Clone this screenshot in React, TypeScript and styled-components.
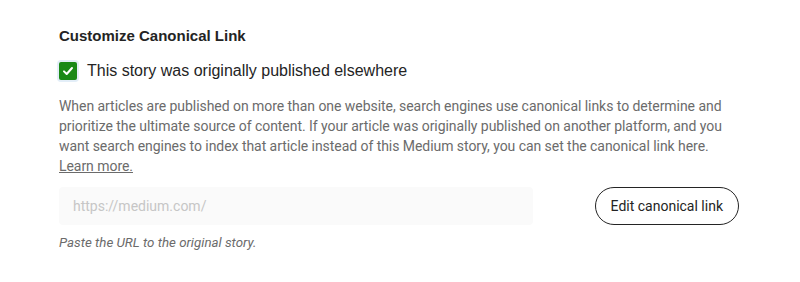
import React from 'react';
import styled, { createGlobalStyle } from 'styled-components';

const GlobalStyle = createGlobalStyle`
  html, body {
    margin: 0;
    padding: 0;
    background: #ffffff;
  }
  body {
    font-family: 'Liberation Sans', Arial, sans-serif;
    color: #242424;
    -webkit-font-smoothing: antialiased;
  }
`;

const narrow = `Roboto, 'Liberation Sans', Arial, sans-serif`;

const Section = styled.section`
  padding: 26px 10px 0 59px;
  width: 800px;
  box-sizing: border-box;
`;

const Title = styled.h3`
  margin: 0;
  font-size: 15px;
  line-height: 20px;
  font-weight: 700;
  color: #242424;
`;

const CheckRow = styled.label`
  display: flex;
  align-items: center;
  gap: 10px;
  margin-top: 14px;
  cursor: pointer;
`;

const Box = styled.span`
  width: 18px;
  height: 18px;
  border-radius: 2px;
  background: #1a8917;
  box-shadow: 0 0 0 2px #e3eef8;
  display: flex;
  align-items: center;
  justify-content: center;
  flex: none;
`;

const CheckLabel = styled.span`
  font-size: 16px;
  line-height: 22px;
  color: #242424;
`;

const Description = styled.p`
  margin: 14px 0 0;
  font-family: ${narrow};
  font-size: 14px;
  line-height: 20px;
  letter-spacing: -0.05px;
  color: #6b6b6b;
  max-width: 682px;

  a {
    color: #6b6b6b;
    text-decoration: underline;
  }
`;

const FieldRow = styled.div`
  display: flex;
  align-items: center;
  justify-content: space-between;
  width: 680px;
  margin-top: 11px;
`;

const UrlInput = styled.input`
  width: 474px;
  height: 38px;
  box-sizing: border-box;
  border: none;
  border-radius: 4px;
  background: #fafafa;
  padding: 0 14px;
  font-family: ${narrow};
  font-size: 14px;
  color: #242424;
  outline: none;

  &::placeholder {
    color: #c6c6c6;
  }
`;

const PillButton = styled.button`
  height: 38px;
  padding: 0 15px;
  border: 1px solid #242424;
  border-radius: 99px;
  background: #ffffff;
  font-family: ${narrow};
  font-size: 14px;
  color: #242424;
  cursor: pointer;
`;

const Hint = styled.p`
  margin: 10px 0 0;
  font-family: ${narrow};
  font-size: 13.3px;
  line-height: 16px;
  font-style: italic;
  color: #6b6b6b;
`;

export default function App() {
  return (
    <>
      <GlobalStyle />
      <Section>
        <Title>Customize Canonical Link</Title>
        <CheckRow>
          <Box>
            <svg width="12" height="12" viewBox="0 0 12 12" fill="none">
              <path
                d="M2 6.4 4.7 9 10 3"
                stroke="#ffffff"
                strokeWidth="2"
                strokeLinecap="round"
                strokeLinejoin="round"
              />
            </svg>
          </Box>
          <CheckLabel>This story was originally published elsewhere</CheckLabel>
        </CheckRow>
        <Description>
          When articles are published on more than one website, search engines use canonical
          links to determine and prioritize the ultimate source of content. If your article was
          originally published on another platform, and you want search engines to index that
          article instead of this Medium story, you can set the canonical link here.{' '}
          <br />
          <a href="#">Learn more.</a>
        </Description>
        <FieldRow>
          <UrlInput placeholder="https://medium.com/" />
          <PillButton>Edit canonical link</PillButton>
        </FieldRow>
        <Hint>Paste the URL to the original story.</Hint>
      </Section>
    </>
  );
}
